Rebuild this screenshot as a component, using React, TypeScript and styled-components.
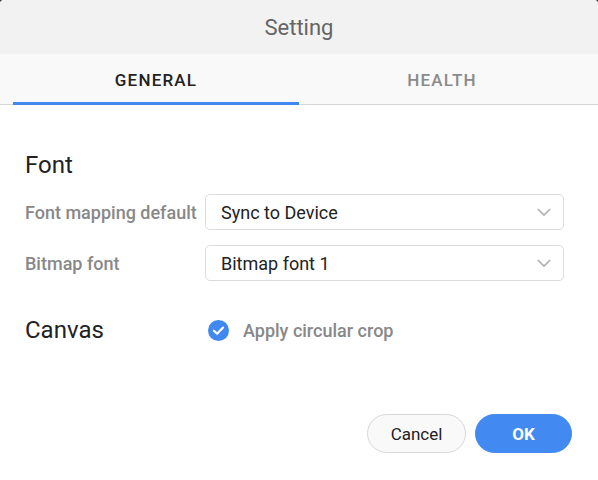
import React from "react";
import styled, { createGlobalStyle } from "styled-components";

const Global = createGlobalStyle`
  html, body { margin: 0; padding: 0; background: #3a3a3a; }
  body { font-family: Roboto, "Noto Sans", Arial, sans-serif; }
  * { box-sizing: border-box; }
`;

const Dialog = styled.div`
  width: 598px;
  height: 480px;
  background: #ffffff;
  border-radius: 4px 4px 0 0;
  overflow: hidden;
  display: flex;
  flex-direction: column;
`;

const Header = styled.div`
  height: 54px;
  background: #f2f2f2;
  display: flex;
  align-items: center;
  justify-content: center;
  font-size: 22px;
  color: #646464;
`;

const TabBar = styled.div`
  position: relative;
  height: 51px;
  background: #f9f9f9;
  border-bottom: 1px solid #d6d6d6;
  display: flex;
  padding: 0 13px;
`;

const Tab = styled.div<{ $active?: boolean }>`
  flex: 1;
  display: flex;
  align-items: center;
  justify-content: center;
  font-size: 17px;
  font-weight: 500;
  letter-spacing: 1.2px;
  padding-top: 2px;
  color: ${(p) => (p.$active ? "#222222" : "#8a8a8a")};
`;

const Indicator = styled.div`
  position: absolute;
  left: 13px;
  width: 286px;
  bottom: -1px;
  height: 3px;
  background: #4188f0;
`;

const Body = styled.div`
  display: flex;
  flex-direction: column;
  padding: 45px 34px 0 25px;
`;

const SectionTitle = styled.div`
  font-size: 24px;
  color: #222222;
  line-height: 30px;
`;

const Row = styled.div`
  display: grid;
  grid-template-columns: 180px 1fr;
  align-items: center;
`;

const Label = styled.div`
  font-size: 18px;
  font-weight: 500;
  color: #888888;
  white-space: nowrap;
`;

const Select = styled.div`
  height: 36px;
  border: 1px solid #dcdcdc;
  border-radius: 5px;
  display: flex;
  align-items: center;
  justify-content: space-between;
  padding: 0 11px 0 15px;
  font-size: 18px;
  color: #222222;
  background: #fff;
`;

const FontRows = styled.div`
  display: flex;
  flex-direction: column;
  gap: 15px;
  margin-top: 14px;
`;

const CanvasRow = styled(Row)`
  margin-top: 34px;
`;

const Check = styled.div`
  display: flex;
  align-items: center;
  gap: 14px;
  font-size: 18px;
  font-weight: 500;
  color: #888888;
  padding-left: 3px;
`;

const Footer = styled.div`
  margin-top: auto;
  display: flex;
  justify-content: flex-end;
  gap: 9px;
  padding: 0 26px 27px 0;
`;

const Button = styled.button<{ $primary?: boolean }>`
  height: 39px;
  width: ${(p) => (p.$primary ? "97px" : "99px")};
  border-radius: 20px;
  font-family: inherit;
  font-size: 17px;
  font-weight: ${(p) => (p.$primary ? 700 : 400)};
  border: 1px solid ${(p) => (p.$primary ? "#4289f1" : "#d8d8d8")};
  background: ${(p) => (p.$primary ? "#4289f1" : "#f9f9f9")};
  color: ${(p) => (p.$primary ? "#ffffff" : "#222222")};
  padding: 0;
`;

const Chevron = () => (
  <svg width="16" height="10" viewBox="0 0 16 10">
    <path d="M1.8 2l6.2 6 6.2-6" fill="none" stroke="#b0b0b0" strokeWidth="1.7" />
  </svg>
);

const CheckIcon = () => (
  <svg width="21" height="21" viewBox="0 0 22 22">
    <circle cx="11" cy="11" r="11" fill="#4188f0" />
    <path d="M6.2 11.2l3.3 3.2 6.3-6.5" fill="none" stroke="#fff" strokeWidth="2.3" strokeLinecap="round" strokeLinejoin="round" />
  </svg>
);

export default function App() {
  return (
    <>
      <Global />
      <Dialog>
        <Header>Setting</Header>
        <TabBar>
          <Tab $active>GENERAL</Tab>
          <Tab>HEALTH</Tab>
          <Indicator />
        </TabBar>
        <Body>
          <SectionTitle>Font</SectionTitle>
          <FontRows>
            <Row>
              <Label>Font mapping default</Label>
              <Select>
                <span>Sync to Device</span>
                <Chevron />
              </Select>
            </Row>
            <Row>
              <Label>Bitmap font</Label>
              <Select>
                <span>Bitmap font 1</span>
                <Chevron />
              </Select>
            </Row>
          </FontRows>
          <CanvasRow>
            <SectionTitle>Canvas</SectionTitle>
            <Check>
              <CheckIcon />
              <span>Apply circular crop</span>
            </Check>
          </CanvasRow>
        </Body>
        <Footer>
          <Button>Cancel</Button>
          <Button $primary>OK</Button>
        </Footer>
      </Dialog>
    </>
  );
}
